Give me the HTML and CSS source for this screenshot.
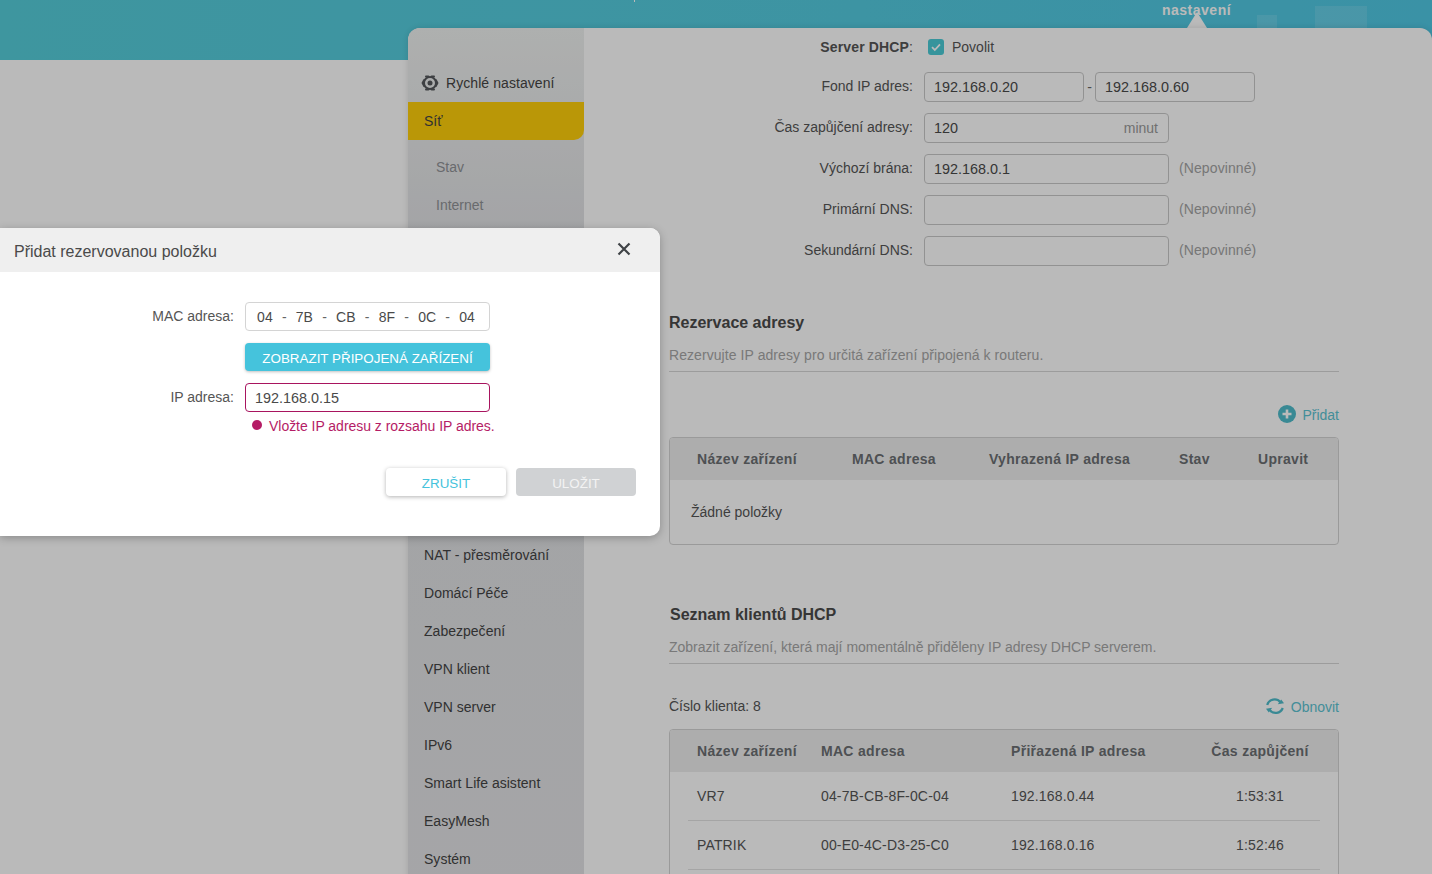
FILE: index.html
```html
<!DOCTYPE html>
<html lang="cs">
<head>
<meta charset="utf-8">
<title>DHCP server</title>
<link rel="stylesheet" href="styles.css">
</head>
<body>
<div class="page">
  <header class="topbar">
    <span class="tick"></span>
    <span class="deco deco-a"></span>
    <span class="deco deco-b"></span>
    <span class="tab">nastavení</span>
    <span class="caret"></span>
  </header>
  <div class="panel">
    <nav class="sidebar">
      <div class="nav-item quick">
        <svg class="quick-icon" viewBox="0 0 18 18" width="18" height="18"><circle cx="9" cy="9" r="6" fill="none" stroke="#55585c" stroke-width="2"/><path d="M5 2.4h2.4M10.6 2.4H13M1.6 9l1.6-3M1.6 9l1.6 3M16.4 9l-1.6-3M16.4 9l-1.6 3M5 15.6h2.4M10.6 15.6H13" stroke="#55585c" stroke-width="2" stroke-linecap="round"/><circle cx="9" cy="9" r="2.5" fill="#55585c"/></svg>
        <span>Rychlé nastavení</span>
      </div>
      <div class="nav-item active">Síť</div>
      <div class="submenu">
        <div class="sub-item">Stav</div>
        <div class="sub-item">Internet</div>
      </div>
      <div class="nav-item">NAT - přesměrování</div>
      <div class="nav-item">Domácí Péče</div>
      <div class="nav-item">Zabezpečení</div>
      <div class="nav-item">VPN klient</div>
      <div class="nav-item">VPN server</div>
      <div class="nav-item">IPv6</div>
      <div class="nav-item">Smart Life asistent</div>
      <div class="nav-item">EasyMesh</div>
      <div class="nav-item">Systém</div>
    </nav>
    <main class="content">
      <div class="form">
        <div class="form-row first">
          <label class="form-label"><b class="strong">Server DHCP</b>:</label>
          <span class="check"><svg viewBox="0 0 16 16" width="16" height="16"><rect width="16" height="16" rx="3" fill="#4acbd6"/><path d="M4 8.2l2.8 2.8L12 5.4" fill="none" stroke="#fff" stroke-width="1.8"/></svg></span>
          <span class="check-text">Povolit</span>
        </div>
        <div class="form-row">
          <label class="form-label">Fond IP adres:</label>
          <div class="field short">192.168.0.20</div>
          <span class="dash">-</span>
          <div class="field short">192.168.0.60</div>
        </div>
        <div class="form-row">
          <label class="form-label">Čas zapůjčení adresy:</label>
          <div class="field wide split"><span>120</span><span class="unit">minut</span></div>
        </div>
        <div class="form-row">
          <label class="form-label">Výchozí brána:</label>
          <div class="field wide">192.168.0.1</div>
          <span class="hint">(Nepovinné)</span>
        </div>
        <div class="form-row">
          <label class="form-label">Primární DNS:</label>
          <div class="field wide"></div>
          <span class="hint">(Nepovinné)</span>
        </div>
        <div class="form-row">
          <label class="form-label">Sekundární DNS:</label>
          <div class="field wide"></div>
          <span class="hint">(Nepovinné)</span>
        </div>
      </div>

      <section class="block reservation">
        <h2 class="block-title">Rezervace adresy</h2>
        <p class="block-desc wider">Rezervujte IP adresy pro určitá zařízení připojená k routeru.</p>
        <div class="toolbar end">
          <span class="action">
            <svg viewBox="0 0 18 18" width="18" height="18"><circle cx="9" cy="9" r="9" fill="#4fbccb"/><path d="M9 4.5v9M4.5 9h9" stroke="#fff" stroke-width="2.6"/></svg>
            <span class="action-text">Přidat</span>
          </span>
        </div>
        <div class="table">
          <div class="thead cols-res">
            <span>Název zařízení</span><span>MAC adresa</span><span>Vyhrazená IP adresa</span><span>Stav</span><span>Upravit</span>
          </div>
          <div class="empty">Žádné položky</div>
        </div>
      </section>

      <section class="block clients">
        <h2 class="block-title shifted">Seznam klientů DHCP</h2>
        <p class="block-desc">Zobrazit zařízení, která mají momentálně přiděleny IP adresy DHCP serverem.</p>
        <div class="toolbar between">
          <span>Číslo klienta: 8</span>
          <span class="action">
            <svg viewBox="0 0 20 18" width="20" height="18"><path d="M2.2 8A7.6 7.6 0 0 1 15.4 5.2" fill="none" stroke="#4fbccb" stroke-width="2.2"/><path d="M19 6.2l-6.2 1 3.4-4.6z" fill="#4fbccb"/><path d="M17.8 11A7.6 7.6 0 0 1 4.6 12.8" fill="none" stroke="#4fbccb" stroke-width="2.2"/><path d="M1 11.8l6.2-1-3.4 4.6z" fill="#4fbccb"/></svg>
            <span class="action-text">Obnovit</span>
          </span>
        </div>
        <div class="table tall">
          <div class="thead cols-cli">
            <span>Název zařízení</span><span>MAC adresa</span><span>Přiřazená IP adresa</span><span class="center">Čas zapůjčení</span>
          </div>
          <div class="trow cols-cli">
            <span>VR7</span><span>04-7B-CB-8F-0C-04</span><span>192.168.0.44</span><span class="center">1:53:31</span>
          </div>
          <div class="trow cols-cli">
            <span>PATRIK</span><span>00-E0-4C-D3-25-C0</span><span>192.168.0.16</span><span class="center">1:52:46</span>
          </div>
        </div>
      </section>
    </main>
  </div>

  <div class="overlay"></div>

  <div class="modal">
    <div class="modal-head">
      <span class="modal-title">Přidat rezervovanou položku</span>
      <svg class="close" viewBox="0 0 14 14" width="14" height="14"><path d="M1.5 1.5l11 11M12.5 1.5l-11 11" stroke="#3f4246" stroke-width="2.2"/></svg>
    </div>
    <div class="modal-body">
      <div class="m-row">
        <label class="m-label">MAC adresa:</label>
        <div class="m-field mac">
          <span>04</span><i>-</i><span>7B</span><i>-</i><span>CB</span><i>-</i><span>8F</span><i>-</i><span>0C</span><i>-</i><span>04</span>
        </div>
      </div>
      <div class="m-row btn-row">
        <button class="btn-teal">ZOBRAZIT PŘIPOJENÁ ZAŘÍZENÍ</button>
      </div>
      <div class="m-row ip-row">
        <label class="m-label">IP adresa:</label>
        <div class="m-field invalid">192.168.0.15</div>
      </div>
      <div class="error"><span class="error-dot"></span><span class="error-text">Vložte IP adresu z rozsahu IP adres.</span></div>
      <div class="m-actions">
        <button class="btn-cancel">ZRUŠIT</button>
        <button class="btn-save">ULOŽIT</button>
      </div>
    </div>
  </div>
</div>
</body>
</html>
```
FILE: styles.css
```css
* { box-sizing: border-box; }
html, body { margin: 0; padding: 0; }
body {
  font-family: "Liberation Sans", Arial, sans-serif;
  font-size: 14px;
  color: #555;
  background: #fff;
}
.page {
  position: relative;
  width: 100%;
  height: 874px;
  overflow: hidden;
}

/* top bar */
.topbar {
  position: relative;
  height: 60px;
  background: linear-gradient(90deg, #56cedb 0%, #54cbe0 60%, #50c8e4 100%);
}
.tab {
  position: absolute;
  left: 1162px;
  top: 2px;
  color: #fff;
  font-weight: bold;
  font-size: 14px;
  letter-spacing: .5px;
  line-height: 17px;
}
.caret {
  position: absolute;
  left: 1187px;
  top: 12px;
  width: 0;
  height: 0;
  border-left: 10px solid transparent;
  border-right: 10px solid transparent;
  border-bottom: 16px solid #fff;
}
.tick { position: absolute; left: 634px; top: 0; width: 1px; height: 2px; background: #fff; }
.deco { position: absolute; background: rgba(255,255,255,.12); }
.deco-a { left: 1257px; top: 15px; width: 20px; height: 20px; }
.deco-b { left: 1315px; top: 6px; width: 52px; height: 30px; }

/* panel */
.panel {
  position: relative;
  display: flex;
  margin: -32px 0 0 408px;
  height: 1000px;
  background: #fff;
  border-radius: 12px 12px 0 0;
  box-shadow: 0 0 6px rgba(0,0,0,.12);
  overflow: hidden;
}
.sidebar {
  flex: 0 0 176px;
  padding-top: 36px;
  background: linear-gradient(180deg, #eff1f0 0, #dfe0e3 220px, #e3e4e6 100%);
  color: #444;
}
.nav-item {
  display: flex;
  align-items: center;
  height: 38px;
  padding-left: 16px;
  letter-spacing: .02px;
}
.quick { padding-left: 13px; gap: 7px; letter-spacing: .07px; }
.quick-icon { flex: none; }
.active {
  background: #ffcf0a;
  border-radius: 0 0 10px 0;
  color: #444;
}
.submenu { height: 396px; padding-top: 8px; }
.sub-item {
  display: flex;
  align-items: center;
  height: 38px;
  padding-left: 28px;
  color: #909296;
}

/* content */
.content { flex: 1; padding-right: 93px; color: #555; }
.form-row {
  display: flex;
  align-items: center;
  height: 41px;
}
.form-row.first { height: 38px; }
.form-label {
  flex: 0 0 329px;
  margin-right: 11px;
  padding-bottom: 2px;
  text-align: right;
}
.form-row.first .form-label { padding-bottom: 0; }
.strong { font-weight: bold; letter-spacing: .15px; }
.check { display: flex; margin: 0 8px 0 4px; }
.check-text { color: #555; }
.field {
  display: flex;
  align-items: center;
  height: 30px;
  padding: 0 10px 0 9px;
  border: 1px solid #c9c9c9;
  border-radius: 4px;
  background: #fff;
  font-size: 14.4px;
  color: #4a4a4a;
}
.short { width: 160px; }
.wide { width: 245px; }
.split { justify-content: space-between; }
.unit { color: #999; font-size: 14px; }
.dash { width: 11px; text-align: center; color: #666; }
.hint { margin-left: 10px; padding-bottom: 2px; letter-spacing: .1px; color: #a3a3a3; }

.block { margin-left: 85px; }
.reservation { padding-top: 39px; }
.clients { padding-top: 57px; }
.block-title {
  margin: 0;
  padding-top: 1px;
  font-size: 16px;
  line-height: 23px;
  font-weight: bold;
  color: #4a4a4a;
}
.shifted { margin-left: 1px; }
.block-desc {
  margin: 11px 0 0;
  padding-bottom: 6px;
  line-height: 20px;
  border-bottom: 1px solid #d6d6d6;
  color: #a6a6a6;
}
.wider { letter-spacing: .07px; }
.toolbar {
  display: flex;
  align-items: center;
  height: 20px;
  margin: 32px 0 13px;
}
.end { justify-content: flex-end; }
.between { justify-content: space-between; }
.action { display: flex; align-items: center; gap: 6px; color: #5cc3d2; }
.action-text { padding-top: 2px; }

.table {
  border: 1px solid #d4d4d4;
  border-radius: 4px;
  overflow: hidden;
  background: #fff;
}
.tall { min-height: 240px; }
.thead {
  display: grid;
  align-items: center;
  height: 42px;
  background: #eeeeee;
  padding-left: 27px;
  font-weight: bold;
  letter-spacing: .3px;
  color: #6b6e72;
}
.cols-res { grid-template-columns: 155px 137px 190px 79px 1fr; }
.thead.cols-cli, .trow.cols-cli { grid-template-columns: 124px 190px 190px 118px; }
.trow {
  display: grid;
  align-items: center;
  height: 49px;
  margin: 0 18px;
  padding-left: 9px;
  border-bottom: 1px solid #e2e2e2;
  letter-spacing: .15px;
  color: #555;
}
.center { text-align: center; white-space: nowrap; }
.empty {
  display: flex;
  align-items: center;
  height: 64px;
  padding-left: 21px;
  color: #555;
}

/* overlay + dialog */
.overlay {
  position: absolute;
  inset: 0;
  background: rgba(0,0,0,.27);
}
.modal {
  position: absolute;
  left: 0;
  top: 228px;
  width: 660px;
  height: 308px;
  background: #fff;
  border-radius: 0 10px 10px 0;
  box-shadow: 0 2px 8px rgba(0,0,0,.25);
  overflow: hidden;
}
.modal-head {
  display: flex;
  align-items: center;
  justify-content: space-between;
  height: 44px;
  padding: 0 29px 0 14px;
  background: #efefef;
  font-size: 16px;
  color: #4a4a4a;
}
.modal-title { padding-top: 4px; }
.close { margin-top: -3px; }
.modal-body { padding-top: 30px; }
.m-row { display: flex; align-items: center; height: 29px; }
.m-label {
  flex: 0 0 234px;
  margin-right: 11px;
  padding-bottom: 2px;
  text-align: right;
  color: #555;
}
.m-field {
  display: flex;
  align-items: center;
  width: 245px;
  height: 29px;
  padding: 0 9px;
  border: 1px solid #d4d4d4;
  border-radius: 4px;
  font-size: 14.4px;
  color: #4a4a4a;
}
.mac { justify-content: space-between; padding: 0 14px 0 11px; font-size: 14px; letter-spacing: .1px; }
.mac i { font-style: normal; color: #666; }
.invalid { border-color: #a8145f; }
.btn-row { margin: 12px 0; padding-left: 245px; height: 28px; }
.ip-row { height: 29px; }
button { font: inherit; border: 0; padding: 2px 0 0; cursor: pointer; }
.btn-teal {
  width: 245px;
  height: 28px;
  border-radius: 4px;
  background: #45c3dc;
  color: #fff;
  font-size: 13.4px;
  box-shadow: 0 1px 3px rgba(0,0,0,.25);
}
.error {
  display: flex;
  align-items: center;
  gap: 7px;
  height: 20px;
  margin: 3px 0 0 252px;
  color: #b51c66;
}
.error-dot { width: 10px; height: 10px; border-radius: 50%; background: #b51c66; }
.error-text { padding-top: 2px; letter-spacing: -.03px; }
.m-actions {
  display: flex;
  justify-content: flex-end;
  gap: 10px;
  padding-right: 24px;
  margin-top: 33px;
}
.m-actions button { width: 120px; height: 28px; border-radius: 4px; font-size: 13.4px; }
.btn-cancel { background: #fff; color: #45c3dc; box-shadow: 0 1px 4px rgba(0,0,0,.3); }
.btn-save { background: #d0d2d4; color: #f3f3f3; }
```
